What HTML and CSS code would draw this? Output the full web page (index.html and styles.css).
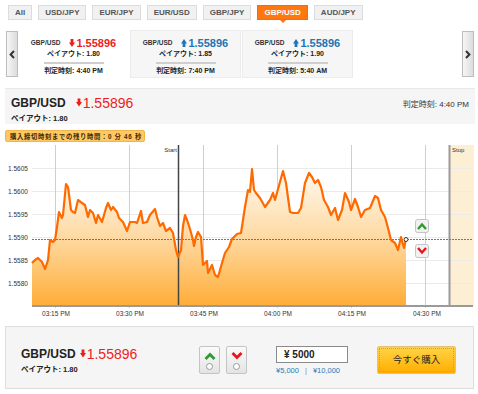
FILE: index.html
```html
<!DOCTYPE html>
<html lang="ja">
<head>
  <meta charset="UTF-8" />
  <title>GBP/USD バイナリー</title>
  <link rel="stylesheet" href="styles.css">
</head>
<body>

<div class="tabs">
  <span class="tab">All</span>
  <span class="tab">USD/JPY</span>
  <span class="tab">EUR/JPY</span>
  <span class="tab">EUR/USD</span>
  <span class="tab">GBP/JPY</span>
  <span class="tab active">GBP/USD</span>
  <span class="tab">AUD/JPY</span>
</div>

<div class="ticker">
  <div class="nav-btn">
    <svg width="6" height="9" viewBox="0 0 6 9"><path d="M5 1L1.6 4.5 5 8" stroke="#333" stroke-width="2" fill="none"/></svg>
  </div>
  <div class="cards">
    <div class="card selected">
      <div class="card-top">
        <span class="card-pair">GBP/USD</span>
        <span class="card-price down"><svg class="arr" width="6" height="8" viewBox="0 0 6 8"><path d="M1.6 0h2.8v3.6H6L3 8 0 3.6h1.6z"/></svg>1.55896</span>
      </div>
      <div class="card-pay">ペイアウト: 1.80</div>
      <div class="card-rule"></div>
      <div class="card-time">判定時刻: 4:40 PM</div>
    </div>
    <div class="card">
      <div class="card-top">
        <span class="card-pair">GBP/USD</span>
        <span class="card-price up"><svg class="arr" width="6" height="8" viewBox="0 0 6 8"><path d="M3 0l3 4.4H4.4V8H1.6V4.4H0z"/></svg>1.55896</span>
      </div>
      <div class="card-pay">ペイアウト: 1.85</div>
      <div class="card-rule"></div>
      <div class="card-time">判定時刻: 7:40 PM</div>
    </div>
    <div class="card">
      <div class="card-top">
        <span class="card-pair">GBP/USD</span>
        <span class="card-price up"><svg class="arr" width="6" height="8" viewBox="0 0 6 8"><path d="M3 0l3 4.4H4.4V8H1.6V4.4H0z"/></svg>1.55896</span>
      </div>
      <div class="card-pay">ペイアウト: 1.90</div>
      <div class="card-rule"></div>
      <div class="card-time">判定時刻: 5:40 AM</div>
    </div>
  </div>
  <div class="nav-btn">
    <svg width="6" height="9" viewBox="0 0 6 9"><path d="M1 1l3.4 3.5L1 8" stroke="#333" stroke-width="2" fill="none"/></svg>
  </div>
</div>

<div class="info">
  <div>
    <div class="quote">
      <span class="pair">GBP/USD</span>
      <span class="price down"><svg class="arr-big" width="6" height="9" viewBox="0 0 6 8"><path d="M1.6 0h2.8v3.6H6L3 8 0 3.6h1.6z"/></svg>1.55896</span>
    </div>
    <div class="payout">ペイアウト: 1.80</div>
  </div>
  <div class="expiry">判定時刻: 4:40 PM</div>
</div>

<div class="countdown">購入締切時刻までの残り時間：0 分 46 秒</div>

<svg class="chart" width="478" height="176" viewBox="0 145 478 176">
  <defs>
    <linearGradient id="fill" gradientUnits="userSpaceOnUse" x1="0" y1="165" x2="0" y2="305">
      <stop offset="0" stop-color="#fffbf5"/>
      <stop offset="0.5" stop-color="#fedba6"/>
      <stop offset="1" stop-color="#ffad38"/>
    </linearGradient>
  </defs>
  <rect x="450" y="145" width="24" height="161" fill="#fdefd4"/>
  <g stroke="#ebebeb" stroke-width="1">
    <line x1="32" y1="168.5" x2="473" y2="168.5"/>
    <line x1="32" y1="191.5" x2="473" y2="191.5"/>
    <line x1="32" y1="214.5" x2="473" y2="214.5"/>
    <line x1="32" y1="237.5" x2="473" y2="237.5"/>
    <line x1="32" y1="260.5" x2="473" y2="260.5"/>
    <line x1="32" y1="283.5" x2="473" y2="283.5"/>
  </g>
  <g stroke="#cfcfcf" stroke-width="1">
    <line x1="55.5" y1="145" x2="55.5" y2="308"/>
    <line x1="129.5" y1="145" x2="129.5" y2="308"/>
    <line x1="203.5" y1="145" x2="203.5" y2="308"/>
    <line x1="277.5" y1="145" x2="277.5" y2="308"/>
    <line x1="351.5" y1="145" x2="351.5" y2="308"/>
    <line x1="425.5" y1="145" x2="425.5" y2="308"/>
  </g>
  <polygon fill="url(#fill)" points="32,305 32,263 35,260 38,258 42,262 45,269 48,260 50,240 53,242 55,240 57,227 59,212 62,218 63,215 66,184 68,187 71,210 73,212 75,213 78,200 82,203 85,205 88,217 90,210 93,213 96,223 98,215 102,222 106,208 108,203 111,210 113,207 117,212 119,218 123,222 127,231 130,222 135,222 137,223 141,211 143,223 147,222 150,215 155,209 157,217 160,226 163,223 166,231 170,228 173,233 176,250 178,257 181,250 183,226 185,215 187,220 190,229 193,240 194,246 196,237 198,232 201,237 203,265 207,261 208,273 212,265 215,275 218,277 222,263 225,253 229,247 232,239 237,234 241,233 245,207 248,190 250,192 252,169 254,190 256,193 260,198 265,207 270,200 273,193 275,200 280,182 283,171 286,183 290,212 293,213 298,213 301,208 305,183 309,173 312,177 315,183 318,180 321,187 324,200 328,207 331,215 335,208 338,220 342,210 345,193 349,202 351,210 355,199 358,207 361,217 365,210 370,208 375,196 378,198 381,210 385,217 388,228 391,240 395,243 398,250 401,237 404,248 406,239 406,305"/>
  <line x1="178.5" y1="145" x2="178.5" y2="305" stroke="#444" stroke-width="1.5"/>
  <line x1="449.5" y1="145" x2="449.5" y2="306" stroke="#9a9a9a" stroke-width="2"/>
  <line x1="32" y1="239.5" x2="473" y2="239.5" stroke="#1f8ee0" stroke-width="1" stroke-dasharray="2 1"/>
  <polyline fill="none" stroke="#ff6a00" stroke-width="2.2" stroke-linejoin="round" points="32,263 35,260 38,258 42,262 45,269 48,260 50,240 53,242 55,240 57,227 59,212 62,218 63,215 66,184 68,187 71,210 73,212 75,213 78,200 82,203 85,205 88,217 90,210 93,213 96,223 98,215 102,222 106,208 108,203 111,210 113,207 117,212 119,218 123,222 127,231 130,222 135,222 137,223 141,211 143,223 147,222 150,215 155,209 157,217 160,226 163,223 166,231 170,228 173,233 176,250 178,257 181,250 183,226 185,215 187,220 190,229 193,240 194,246 196,237 198,232 201,237 203,265 207,261 208,273 212,265 215,275 218,277 222,263 225,253 229,247 232,239 237,234 241,233 245,207 248,190 250,192 252,169 254,190 256,193 260,198 265,207 270,200 273,193 275,200 280,182 283,171 286,183 290,212 293,213 298,213 301,208 305,183 309,173 312,177 315,183 318,180 321,187 324,200 328,207 331,215 335,208 338,220 342,210 345,193 349,202 351,210 355,199 358,207 361,217 365,210 370,208 375,196 378,198 381,210 385,217 388,228 391,240 395,243 398,250 401,237 404,248 406,239"/>
  <circle cx="406" cy="239.5" r="2" fill="#fff" stroke="#333" stroke-width="1"/>
  <line x1="32" y1="306" x2="473" y2="306" stroke="#9a9a9a" stroke-width="2"/>
  <g class="ylab">
    <text x="8" y="170.5">1.5605</text>
    <text x="8" y="193.5">1.5600</text>
    <text x="8" y="216.5">1.5595</text>
    <text x="8" y="240">1.5590</text>
    <text x="8" y="262.5">1.5585</text>
    <text x="8" y="285.5">1.5580</text>
  </g>
  <g class="xlab" text-anchor="middle">
    <text x="56" y="316">03:15 PM</text>
    <text x="130" y="316">03:30 PM</text>
    <text x="204" y="316">03:45 PM</text>
    <text x="278" y="316">04:00 PM</text>
    <text x="352" y="316">04:15 PM</text>
    <text x="427" y="316">04:30 PM</text>
  </g>
  <text class="mark" x="177" y="152" text-anchor="end">Start</text>
  <text class="mark" x="452" y="152">Stop</text>
  <g>
    <rect x="415.5" y="219.5" width="13" height="13" rx="2" fill="#f1f1f1" stroke="#c4c4c4"/>
    <path d="M418 229l4-4.5 4 4.5" fill="none" stroke="#2f9a2f" stroke-width="2.4"/>
    <rect x="415.5" y="244.5" width="13" height="13" rx="2" fill="#f1f1f1" stroke="#c4c4c4"/>
    <path d="M418 248l4 4.5 4-4.5" fill="none" stroke="#e8161b" stroke-width="2.4"/>
  </g>
</svg>

<div class="order">
  <div class="order-quote">
    <div class="quote">
      <span class="pair">GBP/USD</span>
      <span class="price down"><svg class="arr-big" width="6" height="9" viewBox="0 0 6 8"><path d="M1.6 0h2.8v3.6H6L3 8 0 3.6h1.6z"/></svg>1.55896</span>
    </div>
    <div class="payout">ペイアウト: 1.80</div>
  </div>
  <div class="dir-btns">
    <div class="dir-btn">
      <svg width="12" height="8" viewBox="0 0 12 8"><path d="M1.5 7L6 2.5 10.5 7" fill="none" stroke="#2f9a2f" stroke-width="2.8"/></svg>
      <span class="radio"></span>
    </div>
    <div class="dir-btn">
      <svg width="12" height="8" viewBox="0 0 12 8"><path d="M1.5 1L6 5.5 10.5 1" fill="none" stroke="#e8161b" stroke-width="2.8"/></svg>
      <span class="radio"></span>
    </div>
  </div>
  <div class="amount">
    <div class="amount-box">¥ 5000</div>
    <div class="amount-links"><span>¥5,000</span><span class="sep">|</span><span>¥10,000</span></div>
  </div>
  <div class="buy-btn">今すぐ購入</div>
</div>

</body>
</html>
```

FILE: styles.css
```css
body {
  margin: 0;
  width: 478px;
  background: #fff;
  color: #222;
  font-family: "Liberation Sans", Arial, "Noto Sans CJK JP", sans-serif;
}

/* currency tabs */
.tabs {
  display: flex;
  gap: 6px;
  padding: 5px 0 0 8px;
}
.tab {
  box-sizing: border-box;
  height: 15px;
  line-height: 13px;
  padding: 0 6px;
  font-size: 8px;
  font-weight: bold;
  color: #555;
  background: #f1f1f1;
  border: 1px solid #dcdcdc;
}
.tab.active {
  position: relative;
  background: #ff7711;
  border-color: #ff6a00;
  color: #fff;
}
.tab.active::after {
  content: "";
  position: absolute;
  left: 50%;
  bottom: -4px;
  margin-left: -3px;
  border-left: 3px solid transparent;
  border-right: 3px solid transparent;
  border-top: 3px solid #ff7711;
}

/* ticker strip */
.ticker {
  display: flex;
  height: 48px;
  margin-top: 10px;
  padding: 0 4px 0 6px;
}
.nav-btn {
  box-sizing: border-box;
  width: 12px;
  margin: 1px 0;
  display: flex;
  align-items: center;
  justify-content: center;
  background: linear-gradient(to right, #f6f6f6, #dcdcdc);
  border: 1px solid #bdbdbd;
}
.cards {
  flex: 1;
  display: flex;
  gap: 1px;
}
.card {
  box-sizing: border-box;
  width: 111px;
  display: flex;
  flex-direction: column;
  align-items: center;
  padding-top: 5px;
  background: #f6f6f6;
  border: 1px solid #ececec;
}
.card.selected {
  background: #fff;
  border-color: #fff;
}
.card-top {
  display: flex;
  align-items: center;
  gap: 9px;
  height: 13px;
}
.card-pair {
  font-size: 6.5px;
  font-weight: bold;
  color: #333;
}
.card-price {
  display: flex;
  align-items: center;
  gap: 1px;
  font-size: 11px;
  font-weight: bold;
}
.down { color: #ee1c1c; }
.up { color: #2374b4; }
.arr { fill: currentColor; }
.arr-big { fill: currentColor; margin-right: 1px; }
.card-pay,
.card-time {
  height: 10px;
  line-height: 10px;
  font-size: 7px;
  font-weight: bold;
  color: #222;
}
.card-rule {
  width: 60px;
  height: 2px;
  margin: 3px 0 2px;
  background: #cfcfcf;
}

/* selected pair */
.info {
  box-sizing: border-box;
  height: 36px;
  margin: 10px 3px 0 5px;
  padding: 5px 6px 0 6px;
  display: flex;
  justify-content: space-between;
  background: #f5f5f5;
  border-top: 1px solid #e8e8e8;
}
.quote {
  display: flex;
  align-items: center;
  gap: 10px;
  height: 17px;
}
.pair {
  font-size: 12px;
  font-weight: bold;
  color: #222;
}
.price {
  display: flex;
  align-items: center;
  font-size: 14px;
}
.payout {
  font-size: 7.5px;
  font-weight: bold;
  color: #222;
  margin-top: 1px;
}
.expiry {
  font-size: 8px;
  color: #333;
  padding-top: 4px;
}

.countdown {
  box-sizing: border-box;
  width: 140px;
  height: 12px;
  margin: 6px 0 0 5px;
  line-height: 11px;
  padding-left: 4px;
  font-size: 6.3px;
  font-weight: bold;
  letter-spacing: 0.7px;
  color: #3a2a00;
  background: #ffc864;
  border: 1px solid #f2b54c;
  border-radius: 2px;
}

/* chart */
.chart {
  display: block;
  margin-top: 3px;
}
.ylab text,
.xlab text {
  font-size: 6.5px;
  fill: #333;
}
.mark {
  font-size: 6px;
  fill: #333;
}

/* order panel */
.order {
  box-sizing: border-box;
  height: 63px;
  margin: 5px 4px 0 5px;
  display: flex;
  align-items: center;
  padding: 4px 0 0 15px;
  background: #f5f5f5;
  border: 1px solid #dedede;
}
.order-quote {
  width: 178px;
}
.order-quote .quote {
  gap: 4px;
}
.dir-btns {
  display: flex;
  gap: 6px;
  width: 77px;
}
.dir-btn {
  box-sizing: border-box;
  width: 21px;
  height: 28px;
  display: flex;
  flex-direction: column;
  align-items: center;
  padding-top: 5px;
  gap: 3px;
  background: linear-gradient(#fafafa, #e4e4e4);
  border: 1px solid #c4c4c4;
  border-radius: 2px;
}
.radio {
  width: 5px;
  height: 5px;
  border: 1px solid #999;
  border-radius: 50%;
  background: #fff;
}
.amount {
  width: 101px;
  padding-top: 2px;
}
.amount-box {
  box-sizing: border-box;
  width: 72px;
  height: 17px;
  line-height: 15px;
  padding-left: 7px;
  font-size: 10px;
  font-weight: bold;
  background: #fff;
  border: 1px solid #8a8a8a;
}
.amount-links {
  margin-top: 3px;
  font-size: 7.5px;
  color: #2a78b8;
  display: flex;
  gap: 6px;
}
.amount-links .sep {
  color: #888;
}
.buy-btn {
  box-sizing: border-box;
  width: 79px;
  height: 28px;
  line-height: 26px;
  text-align: center;
  font-size: 9.5px;
  color: #222;
  background: linear-gradient(#ffd448, #ffae00);
  border: 1px solid #e2c27a;
  border-radius: 2px;
  outline: 1px dotted #e8a000;
  outline-offset: -3px;
}
```
